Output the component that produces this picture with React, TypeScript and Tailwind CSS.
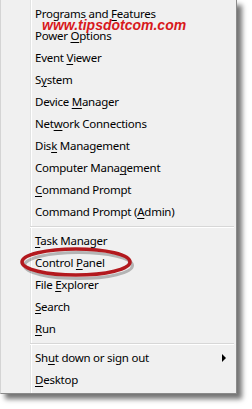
import React from "react";

type Item = {
  before: string;
  key: string;
  after: string;
  submenu?: boolean;
};

const groups: Item[][] = [
  [
    { before: "Programs and ", key: "F", after: "eatures" },
    { before: "Power ", key: "O", after: "ptions" },
    { before: "Event ", key: "V", after: "iewer" },
    { before: "S", key: "y", after: "stem" },
    { before: "Device ", key: "M", after: "anager" },
    { before: "Net", key: "w", after: "ork Connections" },
    { before: "Dis", key: "k", after: " Management" },
    { before: "Computer Mana", key: "g", after: "ement" },
    { before: "", key: "C", after: "ommand Prompt" },
    { before: "Command Prompt (", key: "A", after: "dmin)" },
  ],
  [
    { before: "", key: "T", after: "ask Manager" },
    { before: "Control ", key: "P", after: "anel" },
    { before: "File ", key: "E", after: "xplorer" },
    { before: "", key: "S", after: "earch" },
    { before: "", key: "R", after: "un" },
  ],
  [
    { before: "Sh", key: "u", after: "t down or sign out", submenu: true },
    { before: "", key: "D", after: "esktop" },
  ],
];

function MenuRow({ item }: { item: Item }) {
  return (
    <div className="flex h-[22px] items-center pl-[3px] pr-[10px] text-black">
      <span className="whitespace-pre">
        {item.before}
        <u className="underline-offset-[2px]">{item.key}</u>
        {item.after}
      </span>
      {item.submenu && (
        <span className="ml-auto h-0 w-0 border-y-[4px] border-l-[4px] border-y-transparent border-l-black" />
      )}
    </div>
  );
}

export default function App() {
  return (
    <div className="relative h-[409px] w-[252px] overflow-hidden bg-white font-['Noto_Sans',sans-serif] text-[11.5px] leading-none tracking-[-0.25px]">
      <div className="flex h-[394px] w-[237px] border-b border-l border-r border-b-[#8a8a8a] border-l-[#d4d4d4] border-r-[#8a8a8a] bg-[#f0f0f0] shadow-[5px_5px_5px_rgba(0,0,0,0.55)]">
        {/* icon gutter */}
        <div className="w-[30px] shrink-0 border-r border-[#e2e3e3]" />
        <div className="flex flex-1 flex-col border-l border-white pb-[2px] pt-[3px]">
          {groups.map((group, gi) => (
            <div key={gi}>
              {gi > 0 && (
                <div className="flex h-[7px] flex-col justify-center">
                  <div className="ml-[-2px] mr-[2px] h-px bg-[#d7d7d7]" />
                  <div className="ml-[-2px] mr-[2px] h-px bg-white" />
                </div>
              )}
              {group.map((item, i) => (
                <MenuRow key={i} item={item} />
              ))}
            </div>
          ))}
        </div>
      </div>

      {/* watermark */}
      <div className="absolute left-[42px] top-[18px] font-['Liberation_Sans',sans-serif] text-[14px] font-bold italic tracking-normal text-[#d8191c]">
        www.tipsdotcom.com
      </div>

      {/* highlight ring around Control Panel */}
      <svg
        className="absolute left-0 top-0"
        width="252"
        height="409"
        viewBox="0 0 252 409"
      >
        <ellipse
          cx="77"
          cy="264"
          rx="54"
          ry="13"
          fill="none"
          stroke="rgba(0,0,0,0.25)"
          strokeWidth="3"
          transform="translate(1.5 1.5)"
        />
        <ellipse
          cx="76"
          cy="262"
          rx="54"
          ry="13"
          fill="none"
          stroke="#b3191e"
          strokeWidth="3.5"
        />
      </svg>
    </div>
  );
}
